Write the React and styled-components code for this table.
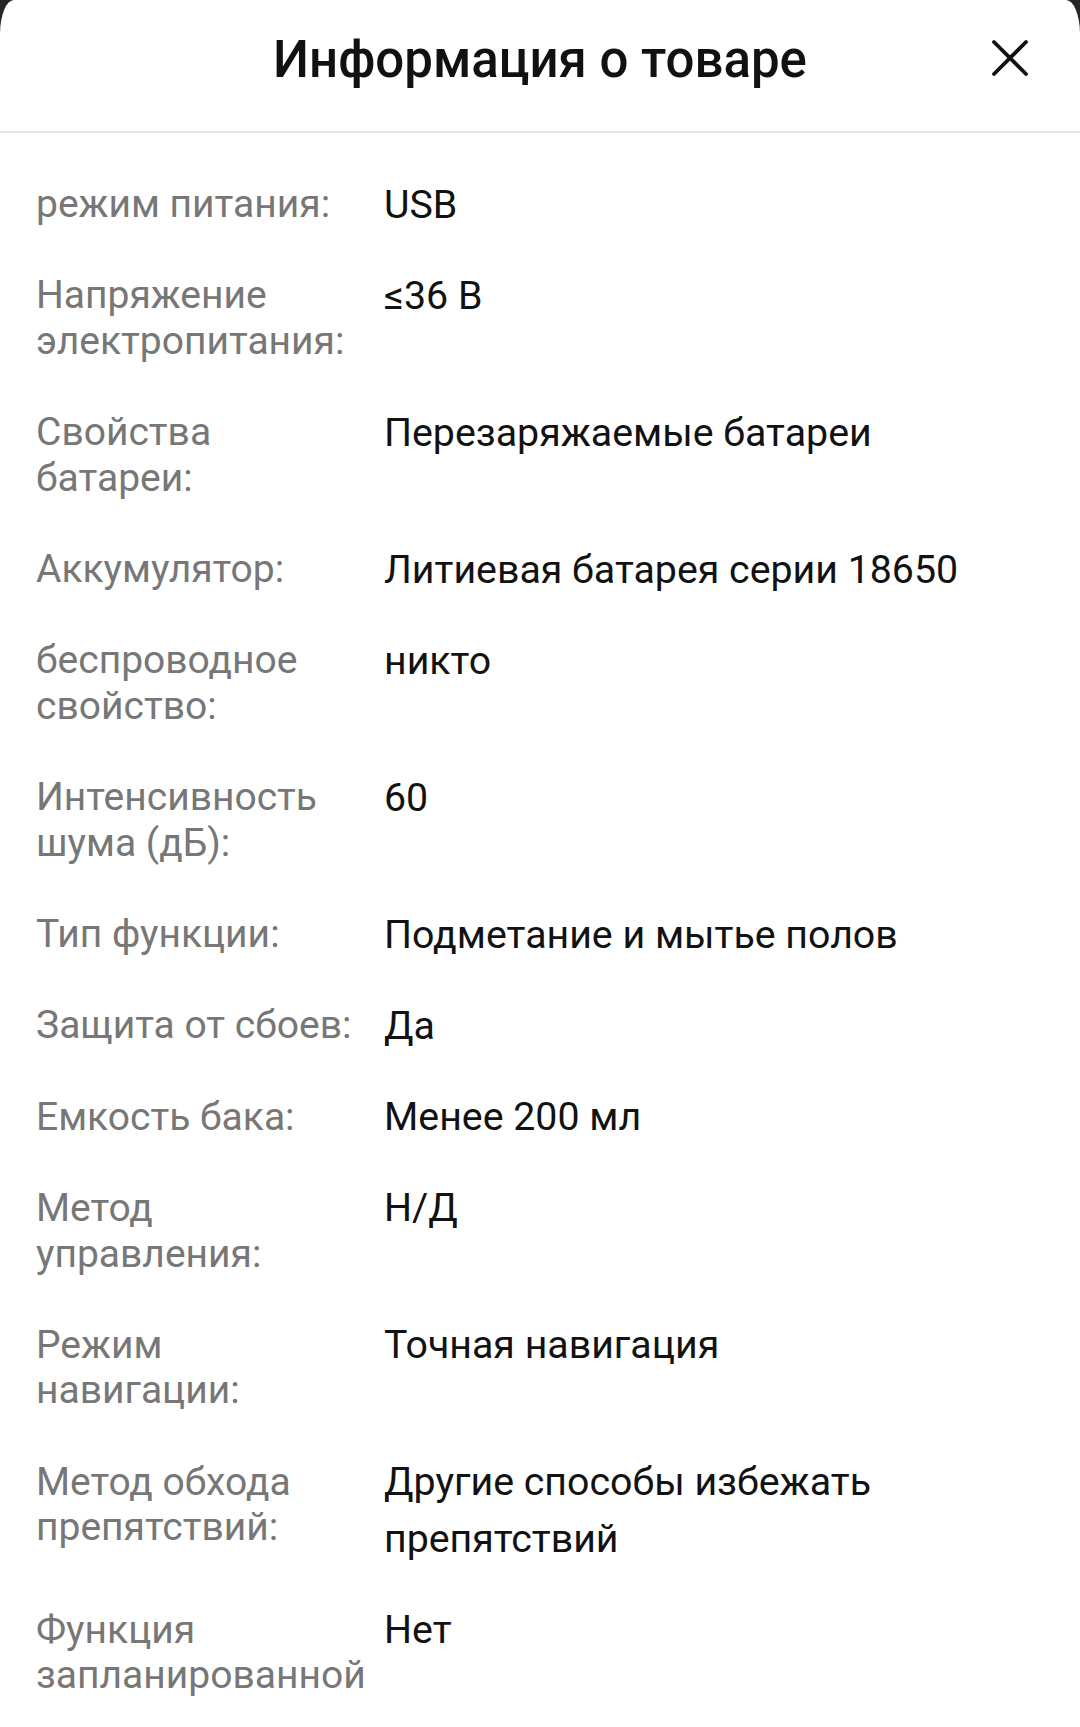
import styled, { createGlobalStyle } from 'styled-components';

const GlobalStyle = createGlobalStyle`
  html, body {
    margin: 0;
    padding: 0;
    background: #262626;
  }
  body {
    font-family: Roboto, "Noto Sans", "Liberation Sans", sans-serif;
    -webkit-font-smoothing: antialiased;
  }
`;

// Sheet
const Sheet = styled.div`
  width: 1080px;
  min-height: 1727px;
  background: #ffffff;
  border-top-left-radius: 14px 34px;
  border-top-right-radius: 14px 34px;
  overflow: hidden;
`;

const Header = styled.header`
  position: relative;
  height: 131px;
  display: flex;
  align-items: center;
  justify-content: center;
  border-bottom: 2px solid #e4e4e4;
  box-sizing: content-box;
`;

const Title = styled.h1`
  margin: 0;
  margin-top: -13px;
  font-size: 51px;
  font-weight: 500;
  color: #111111;
  letter-spacing: 0;
`;

const CloseButton = styled.button`
  position: absolute;
  right: 48px;
  top: 36px;
  width: 44px;
  height: 44px;
  padding: 0;
  border: none;
  background: transparent;
  display: flex;
  align-items: center;
  justify-content: center;
`;

const List = styled.div`
  padding: 49px 36px 0 36px;
`;

const Row = styled.div`
  display: grid;
  grid-template-columns: 338px 1fr;
  column-gap: 10px;
  align-items: start;
  padding-bottom: 45.7px;
`;

const Label = styled.div`
  font-size: 39px;
  line-height: 45.6px;
  color: #777777;
`;

const Value = styled.div`
  margin: -5.5px 0;
  font-size: 39.3px;
  line-height: 56.6px;
  color: #121212;
  padding-right: 40px;
`;

const specs = [
  ['режим питания:', 'USB'],
  ['Напряжение электропитания:', '≤36 В'],
  ['Свойства батареи:', 'Перезаряжаемые батареи'],
  ['Аккумулятор:', 'Литиевая батарея серии 18650'],
  ['беспроводное свойство:', 'никто'],
  ['Интенсивность шума (дБ):', '60'],
  ['Тип функции:', 'Подметание и мытье полов'],
  ['Защита от сбоев:', 'Да'],
  ['Емкость бака:', 'Менее 200 мл'],
  ['Метод управления:', 'Н/Д'],
  ['Режим навигации:', 'Точная навигация'],
  ['Метод обхода препятствий:', 'Другие способы избежать препятствий'],
  ['Функция запланированной', 'Нет'],
];

const CloseIcon = () => (
  <svg width="38" height="38" viewBox="0 0 38 38">
    <path d="M3 3 L35 35 M35 3 L3 35" stroke="#111" strokeWidth="3.8" strokeLinecap="round" fill="none" />
  </svg>
);

const App = () => {
  return (
    <>
      <GlobalStyle />
      <Sheet>
        <Header>
          <Title>Информация о товаре</Title>
          <CloseButton aria-label="Закрыть">
            <CloseIcon />
          </CloseButton>
        </Header>
        <List>
          {specs.map(([label, value]) => (
            <Row key={label}>
              <Label>{label}</Label>
              <Value>{value}</Value>
            </Row>
          ))}
        </List>
      </Sheet>
    </>
  );
};

export default App;
